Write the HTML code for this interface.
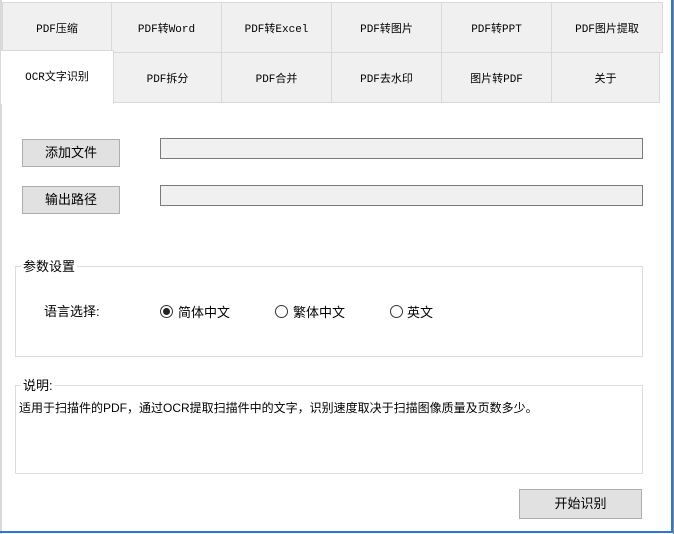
<!DOCTYPE html><html><head><meta charset="utf-8"><style>
*{margin:0;padding:0;box-sizing:border-box}
body{width:674px;height:534px;background:#fff;position:relative;overflow:hidden;font-family:"Liberation Mono","Noto Sans CJK SC",monospace;font-size:12px;color:#000}
.a{position:absolute}
.tab{position:absolute;background:#f0f0f0;border:1px solid #d9d9d9;display:flex;align-items:center;justify-content:center;font-size:11px}
.btn{position:absolute;background:#e1e1e1;border:1px solid #adadad;display:flex;align-items:center;justify-content:center;font-family:"Liberation Sans","Noto Sans CJK SC",sans-serif;font-size:13px;padding-bottom:3px}
.fld{position:absolute;background:#f0f0f0;border:1px solid #7a7a7a}
.grp{position:absolute;border:1px solid #dcdcdc}
.s{font-family:"Liberation Sans","Noto Sans CJK SC",sans-serif;font-size:13px}
.r{position:absolute;width:13px;height:13px;border:1px solid #333;border-radius:50%;background:#fff}
</style></head><body>
<div class="a" style="left:0;top:0;width:2px;height:534px;background:#d9d9d9"></div>
<div class="tab" style="left:2px;top:2px;width:110px;height:51px">PDF压缩</div>
<div class="tab" style="left:111px;top:2px;width:111px;height:51px">PDF转Word</div>
<div class="tab" style="left:221px;top:2px;width:111px;height:51px">PDF转Excel</div>
<div class="tab" style="left:331px;top:2px;width:111px;height:51px">PDF转图片</div>
<div class="tab" style="left:441px;top:2px;width:111px;height:51px">PDF转PPT</div>
<div class="tab" style="left:551px;top:2px;width:112px;height:51px">PDF图片提取</div>
<div class="tab" style="left:113px;top:52px;width:109px;height:51px">PDF拆分</div>
<div class="tab" style="left:221px;top:52px;width:111px;height:51px">PDF合并</div>
<div class="tab" style="left:331px;top:52px;width:111px;height:51px">PDF去水印</div>
<div class="tab" style="left:441px;top:52px;width:111px;height:51px">图片转PDF</div>
<div class="tab" style="left:551px;top:52px;width:109px;height:51px">关于</div>
<div class="a" style="left:1px;top:50px;width:113px;height:54px;background:#fff;border-top:1px solid #d9d9d9;border-right:1px solid #d9d9d9;display:flex;align-items:center;justify-content:center;padding-bottom:4px;font-size:11px">OCR文字识别</div>
<div class="btn" style="left:22px;top:139px;width:98px;height:28px">添加文件</div>
<div class="btn" style="left:22px;top:186px;width:98px;height:28px">输出路径</div>
<div class="fld" style="left:160px;top:138px;width:483px;height:21px"></div>
<div class="fld" style="left:160px;top:185px;width:483px;height:21px"></div>
<div class="grp" style="left:15px;top:266px;width:628px;height:91px"></div>
<div class="a s" style="left:21px;top:256px;background:#fff;padding:0 2px">参数设置</div>
<div class="a s" style="left:44px;top:301px">语言选择:</div>
<div class="r" style="left:160px;top:305px"><div style="position:absolute;left:2px;top:2px;width:7px;height:7px;border-radius:50%;background:#222"></div></div>
<div class="a s" style="left:178px;top:302px">简体中文</div>
<div class="r" style="left:275px;top:305px"></div>
<div class="a s" style="left:293px;top:302px">繁体中文</div>
<div class="r" style="left:390px;top:305px"></div>
<div class="a s" style="left:407px;top:302px">英文</div>
<div class="grp" style="left:15px;top:385px;width:628px;height:89px"></div>
<div class="a s" style="left:21px;top:375px;background:#fff;padding:0 2px">说明:</div>
<div class="a s" style="left:19px;top:399px;font-size:12px">适用于扫描件的PDF，通过OCR提取扫描件中的文字，识别速度取决于扫描图像质量及页数多少。</div>
<div class="btn" style="left:519px;top:489px;width:123px;height:30px;background:#e1e1e1">开始识别</div>
<div class="a" style="left:671px;top:0;width:2px;height:532px;background:#2b79d0"></div>
<div class="a" style="left:0;top:531px;width:673px;height:2px;background:#2b79d0"></div>
<div class="a" style="left:673px;top:0;width:1px;height:534px;background:#888"></div>
</body></html>
